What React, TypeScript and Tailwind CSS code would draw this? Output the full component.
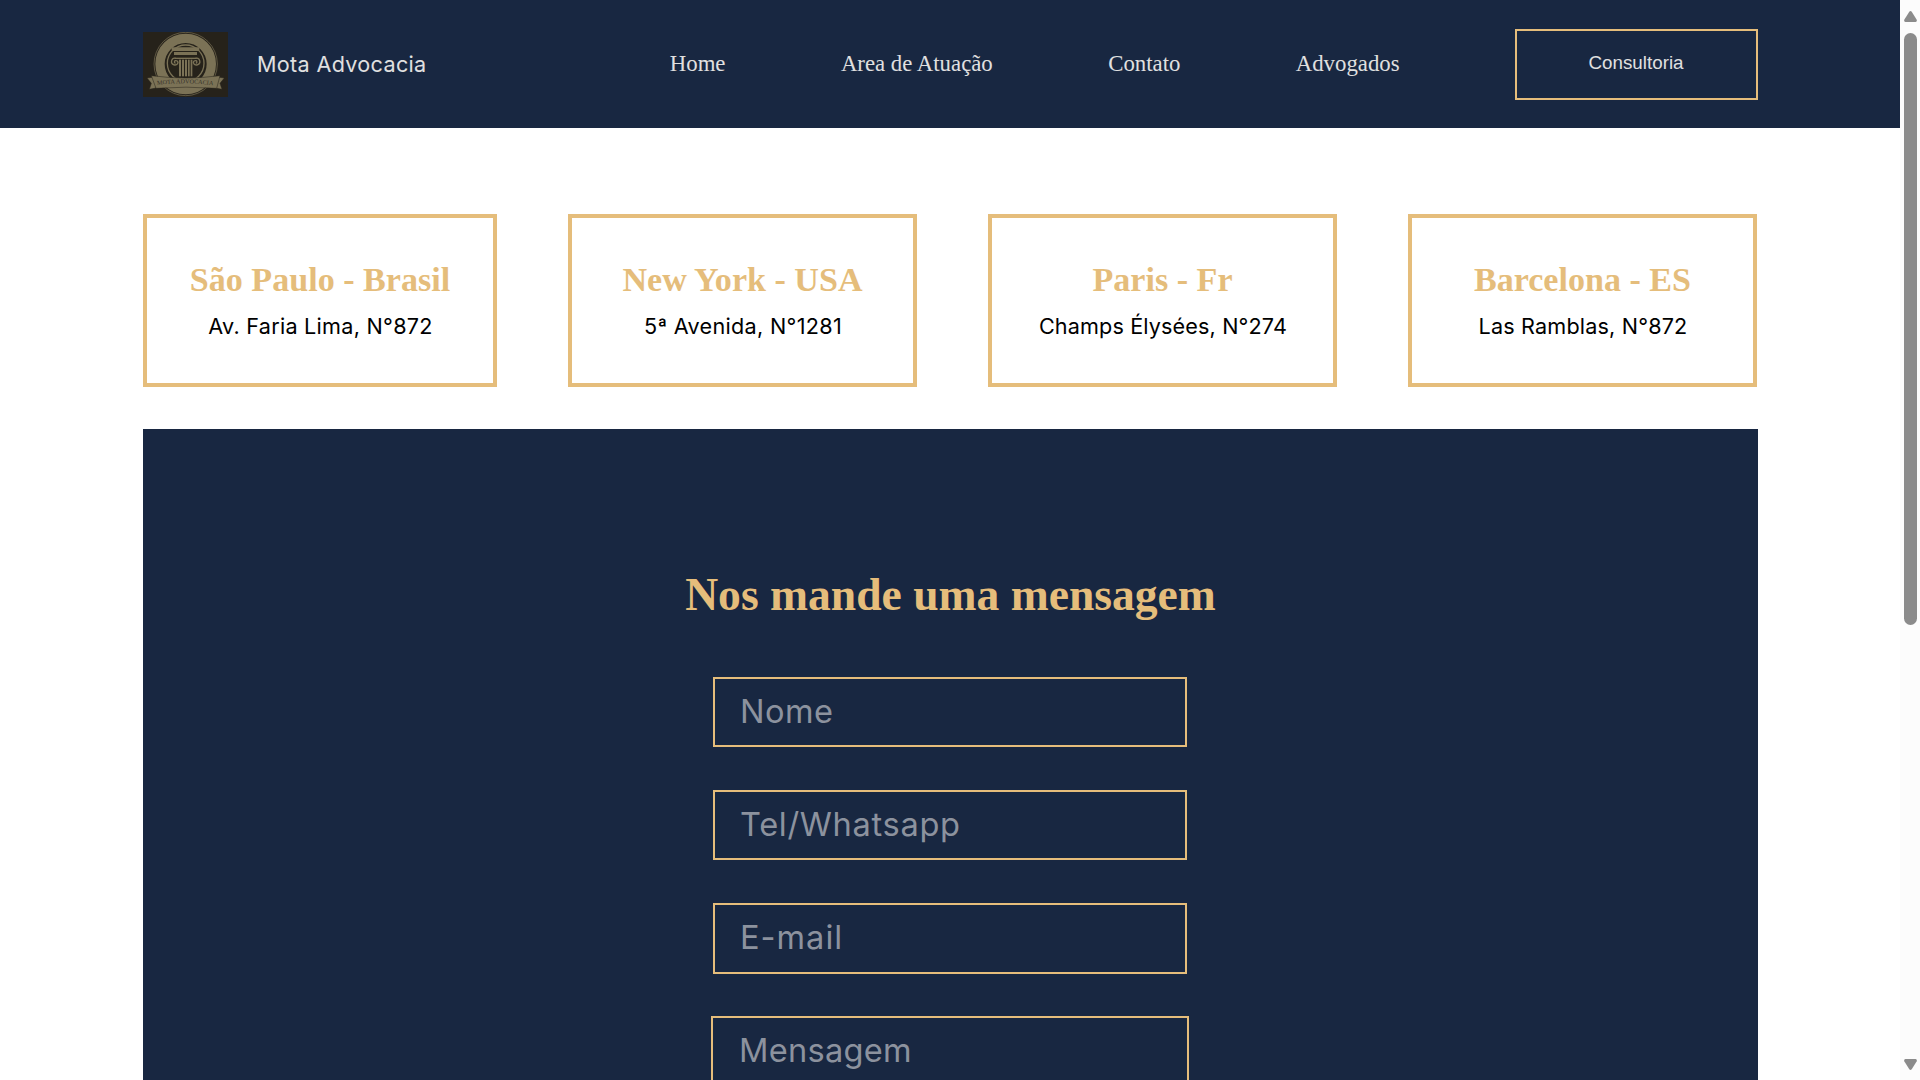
const NAV_LINKS = ['Home', 'Area de Atuação', 'Contato', 'Advogados'];

const OFFICES = [
  { city: 'São Paulo - Brasil', address: 'Av. Faria Lima, N°872', width: 'w-[354px]', tracking: 'tracking-[0.27px]' },
  { city: 'New York - USA', address: '5ª Avenida, N°1281', width: 'w-[349px]', tracking: 'tracking-[0.31px]' },
  { city: 'Paris - Fr', address: 'Champs Élysées, N°274', width: 'w-[349px]', tracking: 'tracking-[0.14px]' },
  { city: 'Barcelona - ES', address: 'Las Ramblas, N°872', width: 'w-[349px]', tracking: 'tracking-[0.17px]' },
];

const FIELDS = [
  { label: 'Nome', size: 'h-[70px] pb-[2px]', tracking: 'tracking-[0.5px]' },
  { label: 'Tel/Whatsapp', size: 'h-[70px] pb-[2px]', tracking: 'tracking-[0.68px]' },
  { label: 'E-mail', size: 'h-[71px] pb-[4px]', tracking: 'tracking-[1px]' },
];

function Logo() {
  return (
    <svg className="h-[65px] w-[85px] shrink-0" viewBox="39 36 255 195" role="img" aria-label="Mota Advocacia">
      <rect x="39" y="36" width="255" height="195" fill="#26221a" />
      <circle cx="167" cy="132" r="95" fill="none" stroke="#7b7256" strokeWidth="2" />
      <circle cx="167" cy="132" r="77" fill="none" stroke="#7b7256" strokeWidth="28" />
      <circle cx="167" cy="130" r="55" fill="none" stroke="#7b7256" strokeWidth="4" />
      {/* capital and shaft of the column */}
      <g fill="#7b7256">
        <rect x="125" y="82" width="83" height="11" rx="2" />
        <rect x="132" y="96" width="69" height="9" />
        <rect x="134" y="113" width="66" height="4" />
        <rect x="147" y="119" width="6" height="50" />
        <rect x="156" y="119" width="6" height="50" />
        <rect x="165" y="119" width="6" height="50" />
        <rect x="174" y="119" width="5" height="50" />
        <rect x="182" y="119" width="5" height="50" />
      </g>
      <g fill="none" stroke="#7b7256" strokeWidth="4" strokeLinecap="round">
        <path d="M137 115A10 10 0 1 0 144 128Q143 121 136 122A4 4 0 0 0 135 129" />
        <path d="M197 115A10 10 0 1 1 190 128Q191 121 198 122A4 4 0 0 1 199 129" />
      </g>
      {/* ribbon */}
      <path d="M51 174L78 170V204L58 208L64 190Z" fill="#7b7256" stroke="#26221a" strokeWidth="1.5" />
      <path d="M283 174L256 170V204L276 208L270 190Z" fill="#7b7256" stroke="#26221a" strokeWidth="1.5" />
      <path d="M64 167Q167 181 270 167L260 205Q167 198 78 205Z" fill="#7b7256" stroke="#26221a" strokeWidth="1.5" />
      <path id="ribbon-line" d="M82 195Q167 184 254 197" fill="none" />
      <text fill="#37322a" fontFamily="'Liberation Serif', serif" fontSize="18.5">
        <textPath href="#ribbon-line" textLength="168" lengthAdjust="spacingAndGlyphs">MOTA ADVOCACIA</textPath>
      </text>
    </svg>
  );
}

function Scrollbar() {
  return (
    <div className="flex h-full w-5 shrink-0 flex-col items-start bg-[#fcfcfc] pt-[11px] pb-[10px] pl-1">
      <svg className="h-[11px] w-[13px] shrink-0" viewBox="0 0 13 11" fill="#8b8b8b">
        <path d="M5.3.8Q6.5-.6 7.7.8L12.6 8.6Q13.4 10.6 11.6 11H1.4Q-.4 10.6.4 8.6Z" />
      </svg>
      <div className="mt-[11px] h-[592px] w-[13px] shrink-0 rounded-full bg-[#8b8b8b]" />
      <svg className="mt-auto h-[11px] w-[13px] shrink-0" viewBox="0 0 13 11" fill="#8b8b8b">
        <path d="M5.3 10.2Q6.5 11.6 7.7 10.2L12.6 2.4Q13.4.4 11.6 0H1.4Q-.4.4.4 2.4Z" />
      </svg>
    </div>
  );
}

export default function App() {
  return (
    <div className="flex h-[1080px] w-[1920px] overflow-hidden bg-white">
      <div className="h-full w-[1900px] overflow-hidden">
        <header className="flex h-32 items-center bg-[#182741] pr-[142px] pl-[143px] text-[#e0e0e0]">
          <Logo />
          <span className="ml-[29px] font-[Inter,sans-serif] text-[21.6px] leading-[26px] tracking-[0.32px]">
            Mota Advocacia
          </span>
          <nav className="ml-auto flex items-center gap-[115.4px] font-['Liberation_Serif',serif] text-[22.8px] leading-[26px]">
            {NAV_LINKS.map((link) => (
              <a key={link} href="#" className="whitespace-nowrap">
                {link}
              </a>
            ))}
            <button className="mt-px h-[71px] w-[243px] border-2 border-[#e5bd7b] pr-[1px] pb-[3px] font-['Liberation_Sans',sans-serif] text-[18.8px] leading-5">
              Consultoria
            </button>
          </nav>
        </header>

        <main className="pr-[142px] pl-[143px]">
          <section className="mt-[86px] flex gap-[71px]">
            {OFFICES.map((office) => (
              <article
                key={office.city}
                className={`${office.width} h-[173px] shrink-0 border-4 border-[#e5bd7b] pt-[42px] text-center whitespace-nowrap`}
              >
                <h2 className="font-['Liberation_Serif',serif] text-[34.1px] leading-10 font-bold text-[#e5bd7b]">
                  {office.city}
                </h2>
                <p className={`${office.tracking} mt-[13px] pl-px font-[Inter,sans-serif] text-[21.6px] leading-[26px] text-black`}>
                  {office.address}
                </p>
              </article>
            ))}
          </section>

          <section className="mt-[42px] flex h-[900px] flex-col items-center bg-[#182741] pt-[140px]">
            <h1 className="font-['Liberation_Serif',serif] text-[45.6px] leading-[52px] font-bold text-[#e5bd7b]">
              Nos mande uma mensagem
            </h1>
            <form className="mt-[56px] flex flex-col items-center pr-px">
              {FIELDS.map((field) => (
                <div key={field.label} className="h-[113px]">
                  <input
                    placeholder={field.label}
                    className={`${field.size} ${field.tracking} block w-[474px] border-2 border-[#e5bd7b] bg-transparent pl-[25px] font-[Inter,sans-serif] text-[32.6px] leading-10 outline-none placeholder:text-[#8c929e]`}
                  />
                </div>
              ))}
              <textarea
                placeholder="Mensagem"
                className="block h-[200px] w-[478px] resize-none border-2 border-[#e5bd7b] bg-transparent pt-[12px] pl-[26px] font-[Inter,sans-serif] text-[32.6px] leading-10 tracking-[0.27px] outline-none placeholder:text-[#8c929e]"
              />
            </form>
          </section>
        </main>
      </div>
      <Scrollbar />
    </div>
  );
}
